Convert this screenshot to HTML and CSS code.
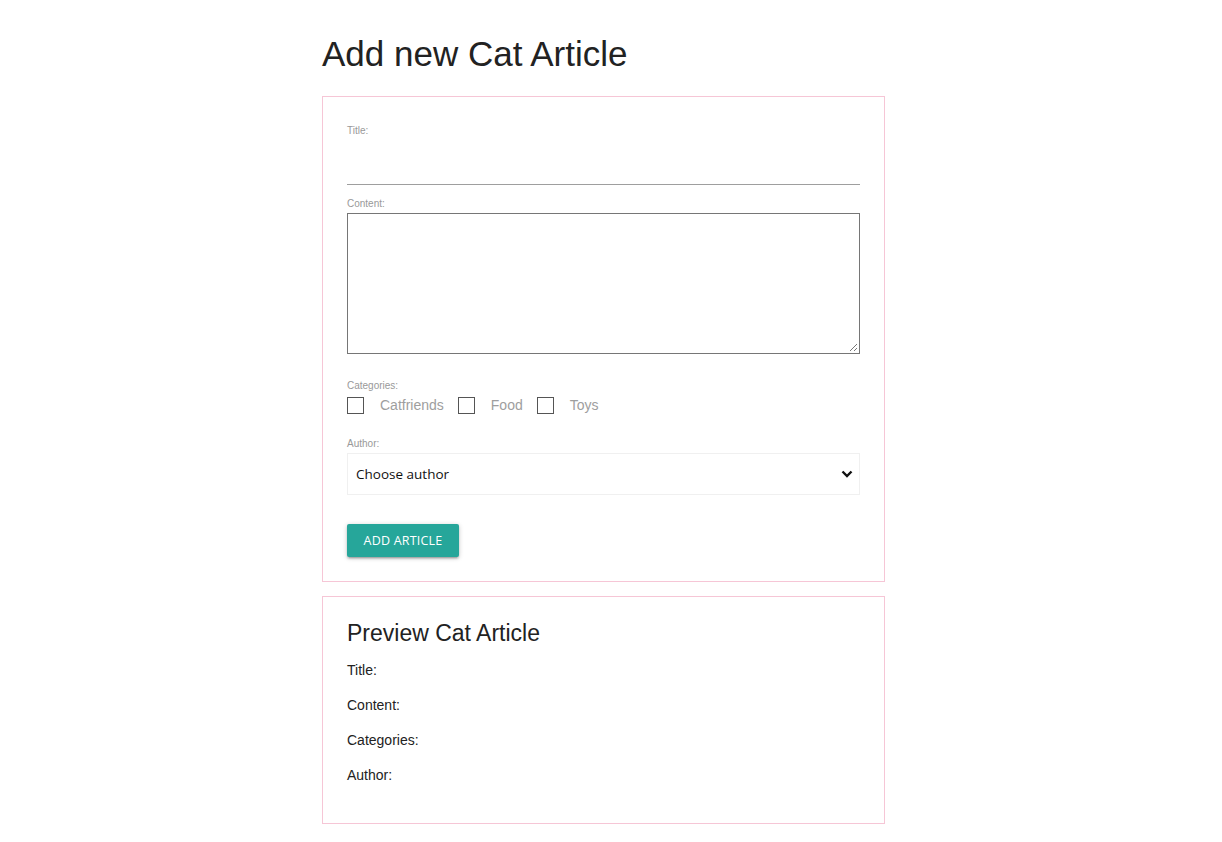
FILE: index.html
```html
<!DOCTYPE html>
<html>
<head>
<meta charset="utf-8">
<link rel="stylesheet" href="styles.css">
</head>
<body>
<main class="page">
  <h1 class="page-title">Add new Cat Article</h1>
  <section class="card form-card">
    <div class="field">
      <label class="field-label">Title:</label>
      <div class="line-input"></div>
    </div>
    <div class="field">
      <label class="field-label">Content:</label>
      <div class="textarea">
        <svg class="grip" width="9" height="9" viewBox="0 0 9 9"><path d="M8 1 L1 8 M8 5 L5 8" stroke="#777" stroke-width="1" fill="none"/></svg>
      </div>
    </div>
    <div class="field cats">
      <label class="field-label">Categories:</label>
      <div class="cat-row">
        <span class="check"></span><span class="cat-text">Catfriends</span>
        <span class="check"></span><span class="cat-text">Food</span>
        <span class="check"></span><span class="cat-text">Toys</span>
      </div>
    </div>
    <div class="field author">
      <label class="field-label">Author:</label>
      <div class="select">
        <span>Choose author</span>
        <svg width="12" height="8" viewBox="0 0 12 8"><path d="M1.5 1.5 L6 6 L10.5 1.5" stroke="#111" stroke-width="2.4" fill="none"/></svg>
      </div>
    </div>
    <button class="btn">ADD ARTICLE</button>
  </section>
  <section class="card preview-card">
    <h2 class="preview-title">Preview Cat Article</h2>
    <p class="preview-line">Title:</p>
    <p class="preview-line">Content:</p>
    <p class="preview-line">Categories:</p>
    <p class="preview-line">Author:</p>
  </section>
</main>
</body>
</html>
```
FILE: styles.css
```css
* { box-sizing: border-box; }
html, body { margin: 0; padding: 0; background: #fff; }
body { font-family: "Liberation Sans", Arial, sans-serif; color: #222; }
.page { width: 563px; margin: 0 0 0 322px; padding-top: 33px; }
.page-title { font-size: 35px; font-weight: 400; margin: 0 0 21px 0; line-height: 42px; color: #222; letter-spacing: 0; }
.card { border: 1px solid #f6c6d6; padding: 24px; }
.form-card { padding-top: 28px; padding-bottom: 24px; }
.field-label { display: block; font-size: 10px; color: #999; line-height: 12px; }
.line-input { height: 37px; border-bottom: 1px solid #9e9e9e; margin-top: 11px; margin-bottom: 13px; }
.textarea { position: relative; height: 141px; border: 1px solid #767676; margin-top: 3px; }
.grip { position: absolute; right: 1px; bottom: 1px; }
.cats { margin-top: 26px; }
.cat-row { display: flex; align-items: center; margin-top: 3px; height: 20px; }
.check { width: 17px; height: 17px; border: 1.5px solid #555; display: inline-block; margin-right: 16px; }
.cat-text { font-size: 14px; color: #9e9e9e; margin-right: 14px; }
.author { margin-top: 23px; }
.select { margin-top: 3px; height: 42px; border: 1px solid #f0f0f0; display: flex; align-items: center; justify-content: space-between; padding: 0 6px 0 8px; font-family: "Open Sans", "Noto Sans", sans-serif; font-size: 13.5px; color: #111; }
.btn { margin-top: 29px; height: 33px; width: 112px; border: none; border-radius: 2px; background: #26a69a; color: #fff; font-family: "Open Sans", "Noto Sans", sans-serif; font-size: 12.5px; letter-spacing: 0.2px; box-shadow: 0 2px 2px 0 rgba(0,0,0,0.14), 0 3px 1px -2px rgba(0,0,0,0.12), 0 1px 5px 0 rgba(0,0,0,0.2); padding: 0; display: block; }
.preview-card { margin-top: 14px; padding-top: 22px; padding-bottom: 40px; }
.preview-title { font-size: 23px; font-weight: 400; margin: 0 0 15px 0; line-height: 28px; color: #222; }
.preview-line { font-size: 14px; margin: 0 0 19px 0; line-height: 16px; color: #222; }
.preview-line:last-child { margin-bottom: 0; }
```
